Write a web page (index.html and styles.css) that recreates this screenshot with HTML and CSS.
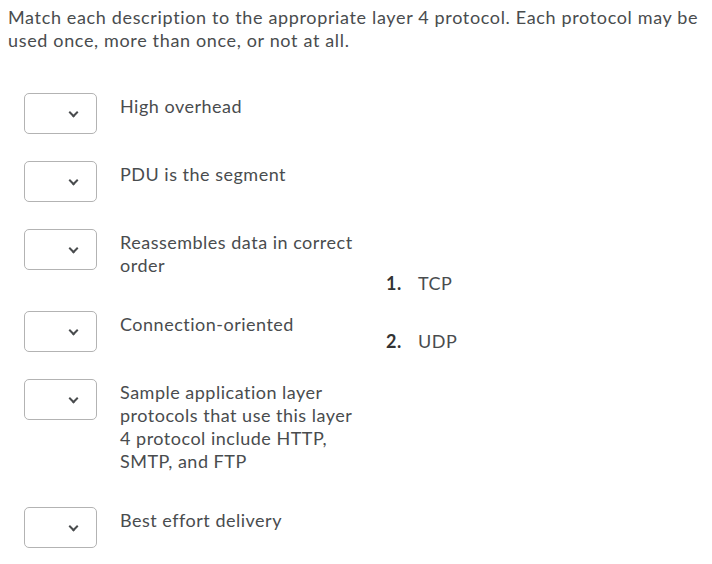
FILE: index.html
```html
<!DOCTYPE html>
<html lang="en">
<head>
  <meta charset="UTF-8">
  <title>Matching question</title>
  <link rel="stylesheet" href="styles.css">
</head>
<body>
  <p class="prompt">Match each description to the appropriate layer 4 protocol. Each protocol may be used once, more than once, or not at all.</p>

  <div class="matching">
    <div class="pairs">
      <div class="pair">
        <div class="choice"><span class="chev"></span></div>
        <div class="desc">High overhead</div>
      </div>
      <div class="pair">
        <div class="choice"><span class="chev"></span></div>
        <div class="desc">PDU is the segment</div>
      </div>
      <div class="pair">
        <div class="choice"><span class="chev"></span></div>
        <div class="desc">Reassembles data in correct order</div>
      </div>
      <div class="pair">
        <div class="choice"><span class="chev"></span></div>
        <div class="desc">Connection-oriented</div>
      </div>
      <div class="pair">
        <div class="choice"><span class="chev"></span></div>
        <div class="desc">Sample application layer protocols that use this layer 4 protocol include HTTP, SMTP, and FTP</div>
      </div>
      <div class="pair">
        <div class="choice"><span class="chev"></span></div>
        <div class="desc">Best effort delivery</div>
      </div>
    </div>

    <ol class="answers">
      <li><span class="num">1.</span>TCP</li>
      <li><span class="num">2.</span>UDP</li>
    </ol>
  </div>
</body>
</html>
```

FILE: styles.css
```css
body {
  margin: 0;
  padding: 6px 8px;
  background: #fff;
  color: #494c4e;
  font-family: Lato, "Noto Sans", sans-serif;
  font-size: 18px;
  line-height: 23px;
  letter-spacing: 0.5px;
}
.prompt {
  margin: 0 0 41px 0;
  letter-spacing: 0.65px;
}
.matching {
  display: flex;
  align-items: flex-start;
}
.pairs {
  padding-left: 16px;
  width: 362px;
}
.pair {
  display: flex;
  align-items: flex-start;
  margin-bottom: 27px;
}
.choice {
  flex: none;
  position: relative;
  width: 71px;
  height: 39px;
  border: 1px solid #b3b3b3;
  border-radius: 5px;
  background: #fff;
}
.chev {
  position: absolute;
  right: 19px;
  top: 15px;
  width: 5px;
  height: 5px;
  border-right: 2px solid #494c4e;
  border-bottom: 2px solid #494c4e;
  transform: rotate(45deg);
}
.desc {
  width: 240px;
  margin-left: 23px;
  padding: 2px 0 7px 0;
}
.answers {
  list-style: none;
  margin: 179px 0 0 0;
  padding: 0;
}
.answers li {
  margin-bottom: 35px;
}
.num {
  display: inline-block;
  width: 32px;
  color: #333;
  font-weight: bold;
}
```
